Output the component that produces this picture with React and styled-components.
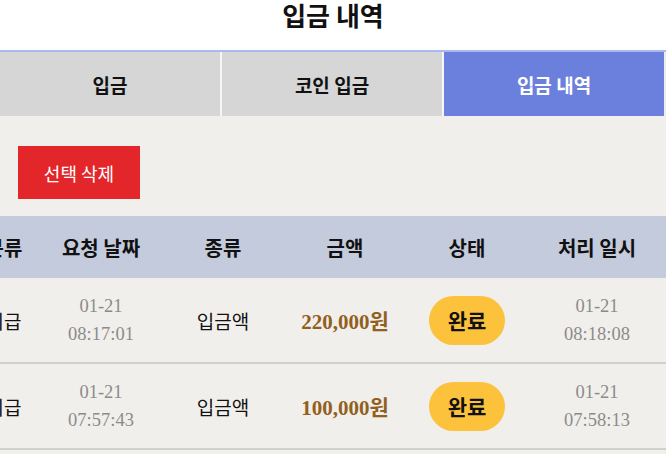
import { useEffect, useRef } from "react";
import styled, { createGlobalStyle } from "styled-components";

const GlobalStyle = createGlobalStyle`
  body {
    margin: 0;
    background: #ffffff;
    font-family: "Noto Sans CJK KR", "Noto Sans", sans-serif;
  }
`;

const Page = styled.div`
  min-height: 454px;
  display: flex;
  flex-direction: column;
`;

const Title = styled.h1`
  margin: 0;
  height: 50px;
  font-size: 26px;
  line-height: 29px;
  font-weight: 700;
  text-align: center;
  color: #111;
`;

const TabBar = styled.nav`
  display: flex;
  border-top: 2px solid #a9baf0;
  padding-right: 2px;
  background: #ececec;
`;

const Tab = styled.div`
  flex: 1;
  height: 64px;
  display: flex;
  align-items: center;
  justify-content: center;
  font-size: 19px;
  font-weight: 700;
  background: ${(p) => (p.$active ? "#6b7fdd" : "#d6d6d6")};
  color: ${(p) => (p.$active ? "#ffffff" : "#111")};
  & + & {
    border-left: 2px solid #f6f6f6;
  }
`;

const Content = styled.main`
  flex: 1;
  background: #f1efec;
  padding-top: 30px;
`;

const Toolbar = styled.div`
  display: flex;
  padding: 0 18px 17px;
`;

const DeleteButton = styled.button`
  width: 122px;
  height: 53px;
  border: none;
  background: #e3262a;
  color: #fff;
  font-family: inherit;
  font-size: 18px;
  cursor: pointer;
`;

const Scroller = styled.div`
  overflow-x: auto;
  scrollbar-width: none;
  &::-webkit-scrollbar {
    display: none;
  }
`;

const Table = styled.table`
  width: 748px;
  table-layout: fixed;
  border-collapse: collapse;
`;

const Th = styled.th`
  height: 62px;
  padding: 0;
  background: #c4cbdc;
  font-size: 20px;
  font-weight: 700;
  color: #111;
  text-align: center;
`;

const Row = styled.tr`
  border-bottom: 2px solid #d2d0cd;
`;

const Td = styled.td`
  height: 84px;
  padding: 0;
  text-align: center;
  vertical-align: middle;
  font-size: 19px;
  color: #111;
`;

const DateText = styled.div`
  font-family: "Liberation Serif", "Noto Sans CJK KR", serif;
  font-size: 18.5px;
  line-height: 28px;
  color: #8b8b8b;
`;

const Amount = styled.span`
  font-family: "Liberation Serif", "Noto Sans CJK KR", serif;
  font-size: 21px;
  font-weight: 700;
  color: #91601d;
`;

const Badge = styled.span`
  display: inline-flex;
  align-items: center;
  justify-content: center;
  width: 76px;
  height: 49px;
  border-radius: 25px;
  background: #fcc23c;
  font-size: 21px;
  font-weight: 700;
  color: #111;
`;

const rows = [
  { id: 1, kind: "지급", req: ["01-21", "08:17:01"], type: "입금액", amount: "220,000원", status: "완료", done: ["01-21", "08:18:08"] },
  { id: 2, kind: "지급", req: ["01-21", "07:57:43"], type: "입금액", amount: "100,000원", status: "완료", done: ["01-21", "07:58:13"] },
];

const DateCell = ({ value }) => (
  <DateText>
    {value[0]}
    <br />
    {value[1]}
  </DateText>
);

export default function App() {
  const scrollRef = useRef(null);

  useEffect(() => {
    const el = scrollRef.current;
    if (el) el.scrollLeft = el.scrollWidth;
  }, []);

  return (
    <>
      <GlobalStyle />
      <Page>
        <Title>입금 내역</Title>
        <TabBar>
          <Tab>입금</Tab>
          <Tab>코인 입금</Tab>
          <Tab $active>입금 내역</Tab>
        </TabBar>
        <Content>
          <Toolbar>
            <DeleteButton>선택 삭제</DeleteButton>
          </Toolbar>
          <Scroller ref={scrollRef}>
            <Table>
              <colgroup>
                <col style={{ width: 50 }} />
                <col style={{ width: 72 }} />
                <col style={{ width: 122 }} />
                <col style={{ width: 122 }} />
                <col style={{ width: 122 }} />
                <col style={{ width: 122 }} />
                <col style={{ width: 138 }} />
              </colgroup>
              <thead>
                <tr>
                  <Th>
                    <input type="checkbox" />
                  </Th>
                  <Th>분류</Th>
                  <Th>요청 날짜</Th>
                  <Th>종류</Th>
                  <Th>금액</Th>
                  <Th>상태</Th>
                  <Th>처리 일시</Th>
                </tr>
              </thead>
              <tbody>
                {rows.map((r) => (
                  <Row key={r.id}>
                    <Td>
                      <input type="checkbox" />
                    </Td>
                    <Td>{r.kind}</Td>
                    <Td>
                      <DateCell value={r.req} />
                    </Td>
                    <Td>{r.type}</Td>
                    <Td>
                      <Amount>{r.amount}</Amount>
                    </Td>
                    <Td>
                      <Badge>{r.status}</Badge>
                    </Td>
                    <Td>
                      <DateCell value={r.done} />
                    </Td>
                  </Row>
                ))}
              </tbody>
            </Table>
          </Scroller>
        </Content>
      </Page>
    </>
  );
}
